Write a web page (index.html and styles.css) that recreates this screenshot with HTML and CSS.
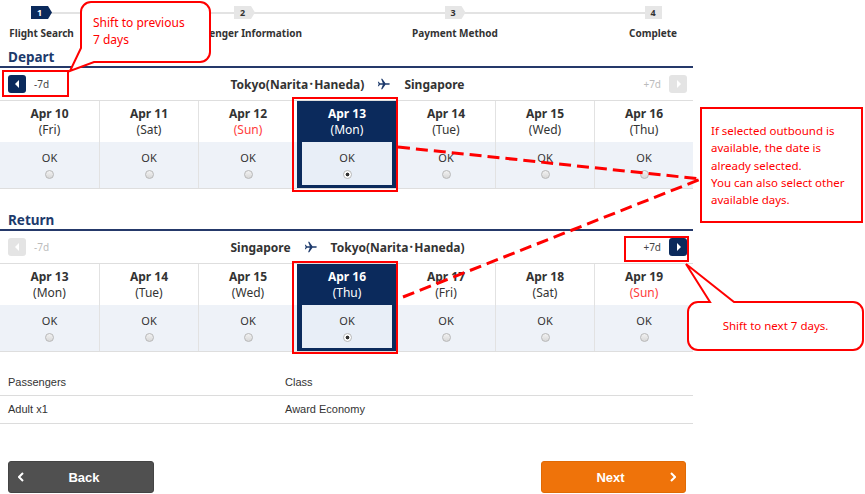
FILE: index.html
```html
<!DOCTYPE html>
<html>
  <head>
    <meta charset="utf-8">
    <title>Flight Search - Select Dates</title>
    <link rel="stylesheet" href="styles.css">
  </head>
  <body>
    <div class="page">
      <div class="main">
        <ol class="steps">
          <li class="step step-current"><span class="step-num">1</span><span class="step-label">Flight Search</span></li>
          <li class="step"><span class="step-num">2</span><span class="step-label">Passenger Information</span></li>
          <li class="step"><span class="step-num">3</span><span class="step-label">Payment Method</span></li>
          <li class="step step-last"><span class="step-num">4</span><span class="step-label">Complete</span></li>
        </ol>

        <section class="leg">
          <h2 class="leg-title">Depart</h2>
          <div class="leg-nav">
            <div class="shift shift-prev"><span class="shift-btn"></span><span>-7d</span></div>
            <div class="route">
              <span>Tokyo(Narita･Haneda)</span>
              <svg class="plane" viewBox="0 0 24 24"><path d="M22 12C22 11 21 10.8 20 10.8H14.5L9 3H7L10 10.8H5L3 8H1.5L2.8 12L1.5 16H3L5 13.2H10L7 21H9L14.5 13.2H20C21 13.2 22 13 22 12Z"/></svg>
              <span>Singapore</span>
            </div>
            <div class="shift shift-next disabled"><span>+7d</span><span class="shift-btn"></span></div>
          </div>
          <div class="days">
            <div class="day"><div class="day-head"><span class="day-date">Apr 10</span><span>(Fri)</span></div><div class="day-body"><span>OK</span><span class="radio"></span></div></div>
            <div class="day"><div class="day-head"><span class="day-date">Apr 11</span><span>(Sat)</span></div><div class="day-body"><span>OK</span><span class="radio"></span></div></div>
            <div class="day"><div class="day-head"><span class="day-date">Apr 12</span><span class="sun">(Sun)</span></div><div class="day-body"><span>OK</span><span class="radio"></span></div></div>
            <div class="day is-selected"><div class="day-head"><span class="day-date">Apr 13</span><span>(Mon)</span></div><div class="day-body"><span>OK</span><span class="radio checked"></span></div></div>
            <div class="day"><div class="day-head"><span class="day-date">Apr 14</span><span>(Tue)</span></div><div class="day-body"><span>OK</span><span class="radio"></span></div></div>
            <div class="day"><div class="day-head"><span class="day-date">Apr 15</span><span>(Wed)</span></div><div class="day-body"><span>OK</span><span class="radio"></span></div></div>
            <div class="day"><div class="day-head"><span class="day-date">Apr 16</span><span>(Thu)</span></div><div class="day-body"><span>OK</span><span class="radio"></span></div></div>
          </div>
        </section>

        <section class="leg leg-return">
          <h2 class="leg-title">Return</h2>
          <div class="leg-nav">
            <div class="shift shift-prev disabled"><span class="shift-btn"></span><span>-7d</span></div>
            <div class="route">
              <span>Singapore</span>
              <svg class="plane" viewBox="0 0 24 24"><path d="M22 12C22 11 21 10.8 20 10.8H14.5L9 3H7L10 10.8H5L3 8H1.5L2.8 12L1.5 16H3L5 13.2H10L7 21H9L14.5 13.2H20C21 13.2 22 13 22 12Z"/></svg>
              <span>Tokyo(Narita･Haneda)</span>
            </div>
            <div class="shift shift-next"><span>+7d</span><span class="shift-btn"></span></div>
          </div>
          <div class="days">
            <div class="day"><div class="day-head"><span class="day-date">Apr 13</span><span>(Mon)</span></div><div class="day-body"><span>OK</span><span class="radio"></span></div></div>
            <div class="day"><div class="day-head"><span class="day-date">Apr 14</span><span>(Tue)</span></div><div class="day-body"><span>OK</span><span class="radio"></span></div></div>
            <div class="day"><div class="day-head"><span class="day-date">Apr 15</span><span>(Wed)</span></div><div class="day-body"><span>OK</span><span class="radio"></span></div></div>
            <div class="day is-selected"><div class="day-head"><span class="day-date">Apr 16</span><span>(Thu)</span></div><div class="day-body"><span>OK</span><span class="radio checked"></span></div></div>
            <div class="day"><div class="day-head"><span class="day-date">Apr 17</span><span>(Fri)</span></div><div class="day-body"><span>OK</span><span class="radio"></span></div></div>
            <div class="day"><div class="day-head"><span class="day-date">Apr 18</span><span>(Sat)</span></div><div class="day-body"><span>OK</span><span class="radio"></span></div></div>
            <div class="day"><div class="day-head"><span class="day-date">Apr 19</span><span class="sun">(Sun)</span></div><div class="day-body"><span>OK</span><span class="radio"></span></div></div>
          </div>
        </section>

        <div class="summary">
          <div class="summary-row summary-head"><span>Passengers</span><span>Class</span></div>
          <div class="summary-row"><span>Adult x1</span><span>Award Economy</span></div>
        </div>

        <div class="actions">
          <a class="btn btn-back" href="#"><svg class="chev" viewBox="0 0 6 10"><path d="M5 1L1 5L5 9"/></svg><span class="btn-label">Back</span></a>
          <a class="btn btn-next" href="#"><span class="btn-label">Next</span><svg class="chev" viewBox="0 0 6 10"><path d="M1 1L5 5L1 9"/></svg></a>
        </div>
      </div>

      <!-- annotations drawn over the screen -->
      <svg class="notes" viewBox="0 0 865 494">
        <rect x="3" y="71" width="65" height="25"/>
        <rect x="293" y="98" width="104" height="93"/>
        <rect x="293" y="262" width="104" height="91"/>
        <rect x="625" y="237" width="63" height="24"/>
        <path class="dash" d="M398 147L701 179M403 297L701 179"/>
        <path class="bubble" d="M91 2H200A10 10 0 0 1 210 12V52A10 10 0 0 1 200 62H94L70 71L81 48V12A10 10 0 0 1 91 2Z"/>
        <rect class="bubble" x="701" y="108" width="161" height="114"/>
        <path class="bubble" d="M698 302H710L686 264L734 302H853A10 10 0 0 1 863 312V340A10 10 0 0 1 853 350H698A10 10 0 0 1 688 340V312A10 10 0 0 1 698 302Z"/>
      </svg>
      <div class="note note-prev">Shift to previous<br>7 days</div>
      <div class="note note-select">If selected outbound is<br>available, the date is<br>already selected.<br>You can also select other<br>available days.</div>
      <div class="note note-next">Shift to next 7 days.</div>
    </div>
  </body>
</html>
```

FILE: styles.css
```css
body{margin:0; background:#fff; color:#333; font-family:"Noto Sans", "Liberation Sans", "Noto Sans CJK JP", sans-serif;}

.page{position:relative; width:865px; height:494px; overflow:hidden;}

.main{width:693px;}

/* steps */
.steps{position:relative; list-style:none; margin:0; padding:6px 0 0; height:38px; display:grid; grid-template-columns:83px 323px 98px 1fr;}
.steps::before{content:""; position:absolute; left:48px; right:36px; top:12px; height:2px; background:#e3e3e3;}
.step{position:relative; display:flex; flex-direction:column; align-items:center;}
.step-last{justify-self:end; margin-right:16px;}
.step-num{box-sizing:border-box; width:21px; height:13px; padding-right:4px; background:#e6e6e6; color:#333; font-size:9px; font-weight:700; line-height:13px; text-align:center; clip-path:polygon(0 0, 17px 0, 21px 50%, 17px 100%, 0 100%);}
.step-current .step-num{background:#0b2a5c; color:#fff;}
.step-last .step-num{width:17px; padding-right:0; clip-path:none;}
.step-label{margin-top:8px; font-size:10px; font-weight:700; line-height:12px; white-space:nowrap; color:#333;}

/* legs */
.leg-title{margin:0; padding:4px 8px 0; height:18px; line-height:18px; font-size:13.5px; font-weight:700; color:#1d3a6c; border-bottom:2px solid #25396a;}
.leg-return .leg-title{margin-top:18px;}
.leg-nav{display:grid; grid-template-columns:1fr auto 1fr; align-items:center; height:32px; padding:0 6px 0 8px;}
.shift{display:flex; align-items:center; gap:8px; font-size:10px; color:#444;}
.shift-next{justify-self:end;}
.shift-btn{display:flex; align-items:center; justify-content:center; width:18px; height:18px; border-radius:3px; background:#0b2a5c;}
.shift-prev .shift-btn::after{content:""; border-top:4px solid transparent; border-bottom:4px solid transparent; border-right:4px solid #fff;}
.shift-next .shift-btn::after{content:""; border-top:4px solid transparent; border-bottom:4px solid transparent; border-left:4px solid #fff; margin-left:1px;}
.shift.disabled{color:#bbb;}
.shift.disabled .shift-btn{background:#e4e4e4;}
.route{display:flex; align-items:center; gap:13px; font-size:12px; font-weight:700; color:#333;}
.plane{width:14px; height:14px; fill:#1d3a6c;}

.days{display:grid; grid-template-columns:repeat(7, 1fr); border-top:1px solid #dedede; border-bottom:1px solid #dedede;}
.day{border-left:1px solid #e2e2e2;}
.day:first-child{border-left:0;}
.day-head{box-sizing:border-box; height:41px; padding-top:5px; display:flex; flex-direction:column; align-items:center; font-size:12px; line-height:16px; color:#333;}
.day-date{font-weight:700;}
.sun{color:#ff3b3b;}
.day-body{box-sizing:border-box; height:46px; padding-top:9px; display:flex; flex-direction:column; align-items:center; gap:5px; background:#eef2f8; font-size:11px; line-height:14px; color:#333;}
.radio{box-sizing:border-box; width:9px; height:9px; border-radius:50%; border:1px solid #b8b8b8; background:linear-gradient(#f2f2f2, #d8d8d8);}
.radio.checked{background:radial-gradient(circle, #333 0 1.6px, #fff 2.2px);}
.day.is-selected{box-sizing:border-box; padding:0 4px 3px; background:#0b2a5c; border-left-color:#0b2a5c;}
.day.is-selected .day-head{color:#fff;}
.day.is-selected .day-body{height:43px; background:#e8eef7;}
.day.is-selected + .day{border-left-color:#0b2a5c;}

/* summary */
.summary{margin-top:18px; font-family:"Liberation Sans", Arial, sans-serif; font-size:11px; color:#333;}
.summary-row{display:grid; grid-template-columns:277px 1fr; padding-left:8px; height:27px; line-height:27px; border-bottom:1px solid #dcdcdc;}
.summary-head{height:25px; line-height:25px;}

/* buttons */
.actions{display:flex; justify-content:space-between; margin-top:37px; padding:0 7px 0 8px;}
.btn{box-sizing:border-box; display:flex; align-items:center; width:146px; height:32px; padding:0 9px; border-radius:3px; color:#fff; text-decoration:none; font-family:"Liberation Sans", Arial, sans-serif; font-size:13px; font-weight:700;}
.btn-back{background:#505050; border:1px solid #444;}
.btn-next{width:145px; background:#ef730a; border:1px solid #e06a05;}
.btn-label{flex:1; text-align:center;}
.chev{width:6px; height:10px; fill:none; stroke:#fff; stroke-width:2;}

/* annotations */
.notes{position:absolute; left:0; top:0; width:865px; height:494px; pointer-events:none;}
.notes rect{fill:none; stroke:#f00; stroke-width:2;}
.notes .dash{fill:none; stroke:#f00; stroke-width:3; stroke-dasharray:12 6;}
.notes .bubble{fill:#fff; stroke:#f00; stroke-width:2;}
.note{position:absolute; color:#f00; font-size:12px; line-height:17px;}
.note-prev{left:93px; top:14px;}
.note-select{left:711px; top:122px; font-size:11.5px; line-height:17.3px;}
.note-next{left:688px; top:317px; width:175px; text-align:center; font-size:11.5px;}
```
